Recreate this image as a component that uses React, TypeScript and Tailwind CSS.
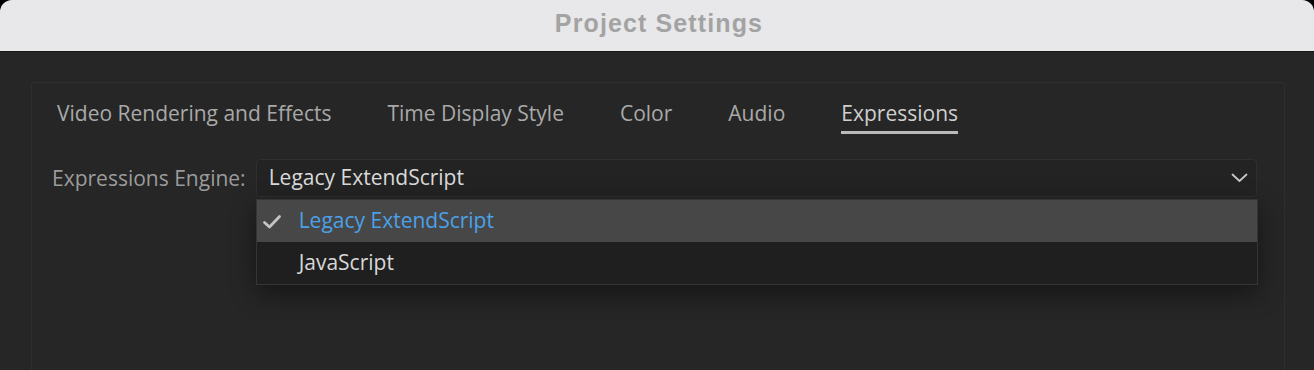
import React from 'react';

const tabs = ['Video Rendering and Effects', 'Time Display Style', 'Color', 'Audio', 'Expressions'];

function Check() {
  return (
    <svg width="20" height="16" viewBox="0 0 20 16" fill="none" aria-hidden="true">
      <path d="M2.5 8.5 L7.5 13 L17.5 2.5" stroke="#c4c4c4" strokeWidth="2.8" strokeLinecap="round" strokeLinejoin="round" />
    </svg>
  );
}

function Chevron() {
  return (
    <svg width="17" height="10" viewBox="0 0 17 10" fill="none" aria-hidden="true">
      <path d="M1.5 1.5 L8.5 8 L15.5 1.5" stroke="#c8c8c8" strokeWidth="1.8" strokeLinecap="round" strokeLinejoin="round" />
    </svg>
  );
}

export default function App() {
  return (
    <div className="w-[1314px] h-[370px] bg-black overflow-hidden" style={{ fontFamily: '"Open Sans", "Noto Sans", sans-serif' }}>
      <div className="h-full rounded-t-[12px] overflow-hidden flex flex-col bg-[#262626]">
        {/* Title bar */}
        <div className="h-[52px] shrink-0 bg-[#e8e8ea] border-b border-[#161616] flex items-center justify-center pb-[4px]">
          <span className="text-[25px] font-bold text-[#a3a3a3] tracking-[0.045em] pl-[4px]" style={{ fontFamily: '"Liberation Sans", Arial, sans-serif' }}>
            Project Settings
          </span>
        </div>

        {/* Body */}
        <div className="flex-1 pt-[30px] pl-[31px] pr-[29px]">
          <div className="h-full border border-[#2e2e2e] border-b-0 rounded-t-[3px] pt-[15px] px-[20px]">
            {/* Tabs */}
            <div className="flex gap-[56px] pl-[5px] text-[21px] text-[#a9a9a9]">
              {tabs.map((t) => (
                <div key={t} className="flex flex-col items-stretch">
                  <span className={t === 'Expressions' ? 'text-[#cfcfcf] leading-[30px]' : 'leading-[30px]'}>{t}</span>
                  <div className={t === 'Expressions' ? 'h-[3px] mt-[3px] bg-[#bababa]' : 'h-[3px] mt-[3px]'} />
                </div>
              ))}
            </div>

            {/* Engine row */}
            <div className="flex items-start gap-[10px] mt-[25px]">
              <span className="text-[21px] text-[#9b9b9b] leading-[38px] shrink-0">Expressions Engine:</span>
              <div className="relative flex-1 mr-[7px]">
                <div className="h-[38px] rounded-[4px] bg-[#232323] border border-[#2f2f2f] flex items-center justify-between pl-[12px] pr-[8px]">
                  <span className="text-[21px] text-[#dadada]">Legacy ExtendScript</span>
                  <Chevron />
                </div>
                <div className="absolute left-0 right-[-1px] top-[40px] border border-[#353535] bg-[#1f1f1f] shadow-[0_8px_24px_rgba(0,0,0,0.45)]">
                  <div className="h-[42px] bg-[#474747] flex items-center">
                    <span className="w-[42px] flex justify-start pl-[5px] pt-[2px]"><Check /></span>
                    <span className="text-[21px] text-[#4ba1e8]">Legacy ExtendScript</span>
                  </div>
                  <div className="h-[42px] flex items-center pl-[42px]">
                    <span className="text-[21px] text-[#d8d8d8]">JavaScript</span>
                  </div>
                </div>
              </div>
            </div>
          </div>
        </div>
      </div>
    </div>
  );
}
